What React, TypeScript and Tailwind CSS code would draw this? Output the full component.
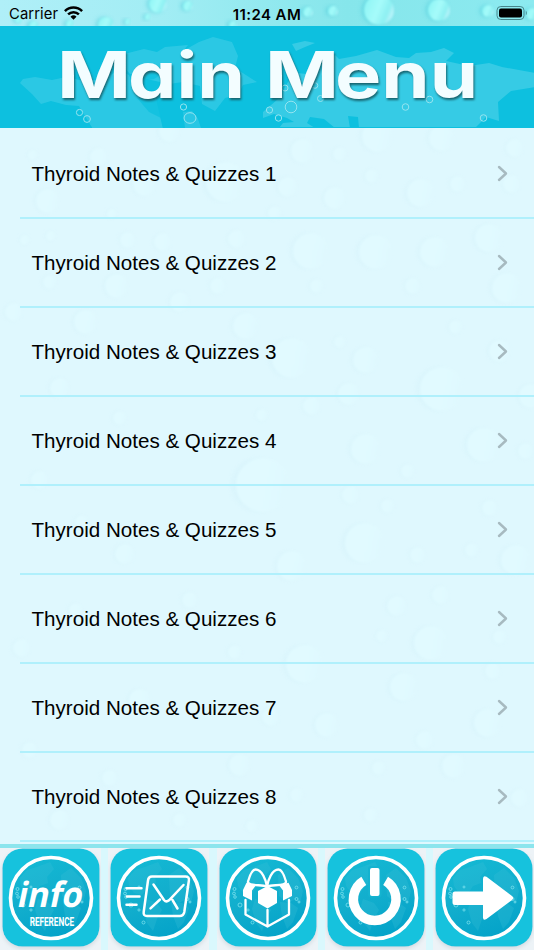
import type { ReactNode } from 'react'

const quizzes = [1, 2, 3, 4, 5, 6, 7, 8].map((n) => `Thyroid Notes & Quizzes ${n}`)

// x, y, radius
const drops: [number, number, number][] = [
  [170, 131, 11], [99, 157, 9], [33, 155, 5], [48, 201, 12], [145, 184, 12], [226, 182, 20],
  [303, 151, 12], [340, 154, 7], [378, 136, 16], [442, 138, 13], [515, 148, 9], [372, 176, 7],
  [421, 193, 14], [335, 198, 11], [458, 184, 8], [512, 184, 9], [288, 187, 10], [275, 213, 7],
  [112, 214, 5], [25, 240, 5], [51, 236, 5], [128, 240, 8], [163, 242, 9], [237, 239, 9],
  [50, 282, 7], [117, 286, 12], [218, 286, 8], [311, 251, 18], [376, 252, 17], [435, 252, 15],
  [489, 238, 14], [507, 288, 15], [413, 286, 8], [317, 286, 7], [14, 312, 9], [86, 322, 12],
  [180, 302, 10], [246, 326, 13], [292, 358, 20], [366, 360, 13], [442, 389, 22], [500, 351, 11],
  [349, 394, 11], [312, 406, 9], [456, 327, 7], [340, 342, 6], [60, 388, 10], [120, 418, 7],
  [531, 396, 12], [262, 415, 6], [263, 485, 27], [366, 449, 15], [484, 445, 17], [408, 471, 7],
  [526, 451, 8], [351, 495, 9], [388, 506, 7], [490, 508, 8], [365, 543, 20], [292, 566, 15],
  [418, 555, 8], [472, 550, 7], [516, 560, 15], [40, 480, 9], [82, 522, 7], [125, 554, 10],
  [397, 606, 10], [441, 595, 9], [305, 664, 19], [431, 643, 17], [500, 637, 7], [382, 636, 6],
  [235, 652, 7], [404, 687, 14], [493, 671, 8], [488, 723, 14], [327, 725, 12], [425, 740, 9],
  [271, 717, 9], [240, 765, 11], [454, 766, 12], [379, 768, 7], [297, 795, 7], [371, 815, 7],
  [252, 826, 6], [520, 798, 9], [22, 648, 9], [76, 610, 7], [140, 700, 11], [30, 750, 8],
  [110, 778, 8], [60, 820, 10], [180, 820, 7], [190, 600, 8],
]

const topDrops: [number, number, number][] = [
  [106, 25, 8], [158, 4, 9], [188, 6, 5], [148, 17, 3], [128, 22, 3], [19, 19, 4],
  [308, 12, 5], [333, 11, 5], [379, 10, 15], [439, 10, 11], [488, 11, 6], [532, 14, 6],
  [70, 24, 4], [34, 26, 5], [233, 25, 4],
]

function Background() {
  return (
    <svg className="absolute inset-0 h-full w-full" viewBox="0 0 534 950" aria-hidden="true">
      <defs>
        <linearGradient id="drop" x1="0" x2="1" y1="0.3" y2="0.5">
          <stop offset="0" stopColor="#e1faff" />
          <stop offset="0.55" stopColor="#e1faff" />
          <stop offset="1" stopColor="#dff8fe" />
        </linearGradient>
        <linearGradient id="topDrop" x1="0" x2="1" y1="0.2" y2="0.6">
          <stop offset="0" stopColor="#8df5f5" />
          <stop offset="0.5" stopColor="#a6fbfa" />
          <stop offset="0.8" stopColor="#8df0f2" />
          <stop offset="1" stopColor="#c1f5fc" />
        </linearGradient>
        <linearGradient id="topBar">
          <stop offset="0" stopColor="#b0eff8" />
          <stop offset="0.3" stopColor="#a2edf4" />
          <stop offset="0.65" stopColor="#86e6eb" />
          <stop offset="1" stopColor="#8ceaf0" />
        </linearGradient>
        <filter id="soft" x="-30%" y="-30%" width="160%" height="160%"><feGaussianBlur stdDeviation="2" /></filter>
        <filter id="edge"><feGaussianBlur stdDeviation="0.9" /></filter>
      </defs>
      <rect width="534" height="950" fill="#dff8fe" />
      {drops.map(([x, y, r]) => (
        <g key={`${x}-${y}`}>
          <circle cx={x - r / 5} cy={y} r={r} fill="#d3f1f9" opacity="0.4" filter="url(#soft)" />
          <circle cx={x} cy={y} r={r} fill="url(#drop)" filter="url(#edge)" />
        </g>
      ))}
      <rect width="534" height="27" fill="url(#topBar)" />
      {topDrops.map(([x, y, r]) => (
        <g key={`${x}-${y}`}>
          <circle cx={x - 2.5} cy={y} r={r} fill="#4ccad9" opacity="0.5" filter="url(#soft)" />
          <circle cx={x} cy={y} r={r} fill="url(#topDrop)" filter="url(#edge)" />
        </g>
      ))}
    </svg>
  )
}

function StatusBar() {
  return (
    <div className="relative grid h-[26px] shrink-0 grid-cols-3 items-center px-[9px] font-['Inter',sans-serif] text-[14.8px] leading-none text-black">
      <div className="flex items-center gap-1.5 pt-0.5">
        <span className="tracking-[0.1px]">Carrier</span>
        <svg width="19" height="14" viewBox="0 0 19 14" className="-mt-0.5" aria-label="Wi-Fi">
          <g fill="none" stroke="#000" strokeWidth="2.5">
            <path d="M.9 5.1a12.2 12.2 0 0 1 17.2 0" />
            <path d="M4.1 8.4a7.6 7.6 0 0 1 10.8 0" />
          </g>
          <path d="M6.5 10.8a4.3 4.3 0 0 1 6 0l-3 3z" />
        </svg>
      </div>
      <span className="pt-0.5 text-center text-[15px] font-semibold tracking-[0.4px] whitespace-nowrap">11:24 AM</span>
      <svg width="32" height="16" viewBox="0 0 32 16" className="-mr-[3px] justify-self-end" aria-label="Battery">
        <rect x="1" y="1.5" width="27" height="13" rx="3.8" fill="none" stroke="#46868c" />
        <rect x="3" y="3.5" width="23" height="9" rx="2" />
        <path d="M29.8 5.5q2 2.5 0 5z" fill="#46868c" />
      </svg>
    </div>
  )
}

function Header() {
  return (
    <header className="relative h-[102px] shrink-0 bg-[#0dc0df]">
      <svg className="block h-full w-full" viewBox="0 26 534 102" role="img" aria-label="Main Menu">
        <g fill="#36cbe5">
          <path d="m20 83 3-4 12-2 17 3 14-3 18 4 20-2 15-9 10 5 6 14 20 6 8 34h-70l-8-13-6-10-13-1-15-4-10 3-9-10z" opacity=".75" />
          <path d="m120 62 4-8 20-5 13 3 8-5 23-2-5 6 16-9 14-5 19 5 6 14-3 12 14 9 8 5-14 3-5 10-13 3-10 13-13-7-2-18-17-4-14 2-18-4-21-6z" opacity=".75" />
          <path d="m183 112 9-1 6 8 3 9h-16z" opacity=".7" />
          <path d="m292 44 13-3 10 2-10 4-9 4z" />
          <path d="m263 112 15-13 10-17 9-9 10 1 9-12 6 3 13-10 4 4 17-3 21-6 19 7 13 1 7-5 15-1 13-4 10 5-8 8 23 5 20-3 13 4 33 6v14l-24 4-13 11 1 19-13-4-10 10H263z" />
          <path d="m345 64 14-7 23-4-22 8-11 9z" />
        </g>
        <g fill="#0dc0df">
          <path d="m137 98 14-2 12 9-2 13-12-6zM150 71l12 3-8 5-13 2z" opacity=".75" />
          <path d="m263 118 11-4 13 4 7 4-11 1-4 5h-16zM310 117l14 2 11 9h-20l-8-5zM348 116l10 1 1 11h-9z" />
        </g>
        <g fill="none" stroke="#95e4f0" strokeWidth="1">
          <circle cx="79.5" cy="112.5" r="3.1" /><circle cx="87" cy="119" r="3.4" />
          <circle cx="183.5" cy="107" r="3.1" /><ellipse cx="190" cy="118" rx="6" ry="5.3" />
          <circle cx="285" cy="88" r="3" /><circle cx="315" cy="85.5" r="2.8" />
          <circle cx="320.5" cy="98.5" r="3" /><circle cx="291" cy="107" r="5.8" />
          <circle cx="269.5" cy="110" r="3.1" /><circle cx="278.5" cy="118" r="3.2" />
          <circle cx="405.5" cy="107" r="3.3" /><circle cx="429.5" cy="99.5" r="3.3" />
          <circle cx="483.5" cy="118" r="3.3" />
        </g>
        <g
          className="font-['Inter',sans-serif] text-[64px] font-bold [font-feature-settings:'cv11'] [filter:drop-shadow(1.5px_2px_1px_#17636e)]"
          fill="#f3fdff"
        >
          <text y="97.7">
            <tspan x="57" textLength="74" lengthAdjust="spacingAndGlyphs">M</tspan>
            <tspan x="128" textLength="117" lengthAdjust="spacingAndGlyphs">ain</tspan>
          </text>
          <text y="97.7">
            <tspan x="265" textLength="74" lengthAdjust="spacingAndGlyphs">M</tspan>
            <tspan x="335" textLength="143" lengthAdjust="spacingAndGlyphs">enu</tspan>
          </text>
        </g>
      </svg>
    </header>
  )
}

function QuizRow({ title }: { title: string }) {
  return (
    <li className="ml-5 flex h-[89px] shrink-0 items-center justify-between border-b-2 border-[#b0f0fc] pr-[26px] pl-[11.5px]">
      <span className="pt-px text-[20.6px] leading-none text-black">{title}</span>
      <svg width="11" height="17" viewBox="0 0 11 17" fill="none" aria-hidden="true">
        <path d="m2 2 7 6.5L2 15" stroke="#a7bac0" strokeWidth="2.4" strokeLinecap="round" strokeLinejoin="round" />
      </svg>
    </li>
  )
}

function Tile({ label, children }: { label: string; children: ReactNode }) {
  return (
    <button type="button" aria-label={label} className="h-[102px] w-[101px] shrink-0 bg-[#edf3f7]">
      <svg className="block" width="101" height="102" viewBox="0 0 101 102">
        <defs>
          <linearGradient id="disc" x1="0.2" y1="0" x2="0.6" y2="1">
            <stop offset="0" stopColor="#13b9d4" />
            <stop offset="0.5" stopColor="#12aecd" />
            <stop offset="1" stopColor="#04a3c9" />
          </linearGradient>
          <filter id="tileShadow" x="-10%" y="-10%" width="120%" height="125%">
            <feDropShadow dx="0" dy="2" stdDeviation="2" floodColor="#a7b7bf" floodOpacity=".4" />
          </filter>
        </defs>
        <rect x="2.5" y=".5" width="97" height="98" rx="20" fill="#14c2dd" filter="url(#tileShadow)" />
        <circle cx="51" cy="50" r="40.5" fill="url(#disc)" stroke="#fff" strokeWidth="3.6" />
        <g fill="#3bc0d9" opacity=".28">
          <path d="m20 30 7-8 10-3 13-5 4 7-7 8 1 6-8 3-6 9-8-2-5-7z" />
          <path d="m38 51 11 4 5 7-5 9-4 12-6-8-4-14z" />
          <path d="m61 27 10-7 10 10 5 13-3 12-5-4-7 4-9-7z" />
          <path d="m63 54 11 1 7 5-5 14-6 7-5-13z" />
        </g>
        <g fill="none" stroke="#7ce1ed" strokeWidth=".8">
          <circle cx="17.5" cy="41" r="1.5" /><circle cx="17" cy="45.5" r="1.4" /><circle cx="18" cy="49" r="1.3" />
          <circle cx="31" cy="39" r="1" /><circle cx="79.5" cy="39.5" r="1.4" />
          <circle cx="79.5" cy="51" r="1.5" /><circle cx="82" cy="54" r="1" />
          <circle cx="23" cy="57" r="2" /><circle cx="31" cy="62" r="1.1" /><circle cx="35.5" cy="74.5" r="1.5" />
        </g>
        {children}
      </svg>
    </button>
  )
}

function Toolbar() {
  return (
    <nav className="relative flex h-[106px] shrink-0 justify-between border-t-4 border-[#8ce5ed] bg-[#d9f8fd]">
      <Tile label="Info reference">
        <g fill="#fff">
          <text transform="translate(16 59) skewX(-12)" textLength="65" lengthAdjust="spacingAndGlyphs" className="font-['Open_Sans',sans-serif] text-[35px] font-bold">info</text>
          <text transform="translate(29.7 78.3) scale(.605 1)" className="font-['Roboto',sans-serif] text-[13.5px] font-bold">REFERENCE</text>
        </g>
      </Tile>
      <Tile label="Contact">
        <g fill="none" stroke="#fff" strokeWidth="2.5" strokeLinecap="round" strokeLinejoin="round">
          <path d="M44 28.5h33.5q4 0 3.4 4l-4.6 31.5q-.7 4-4.7 4h-32.5q-4 0-3.4-4l4.3-31.5q.5-4 4-4z" />
          <path d="m45.5 36.5 10.5 15.5q2.2 2.6 5 .3L75.5 37M42.5 60.3l9.5-8.8M64.5 52l5 8.5" />
          <path d="M18.5 40.2h15M19 48.5h12.5M18.5 56.8h10" />
        </g>
      </Tile>
      <Tile label="Gifts">
        <g fill="none" stroke="#fff" strokeWidth="2.3" strokeLinejoin="round" strokeLinecap="round">
          <path d="M50 38.5C49 32 45 21.500 38.500 21.500 35 21.500 32 30 31 33.500 30.200 38 44 36.500 50 38.500Z" />
          <path d="M50 38.500C51 32 55 21.500 61.500 21.500 65 21.500 68 30 69 33.500 69.800 38 56 36.500 50 38.500Z" />
          <path d="M28.500 52v14.500L50.500 78.500 72 66.500V52M50.500 62v15" />
        </g>
        <g fill="#fff">
          <path d="m29.500 34.800 9.500 2.400-4 5.300v10l-9-4.500V42z" />
          <path d="m71.500 34.800-9.500 2.400 4 5.300v10l9-4.500V42z" />
          <path d="m50.500 38 9.500 5v12l-9.500 5.500L41 55V43z" />
        </g>
      </Tile>
      <Tile label="Quit">
        <path d="M38.800 32.800a21.300 21.300 0 1 0 21.800 0" fill="none" stroke="#fff" strokeWidth="9.5" />
        <rect x="43" y="18" width="13.5" height="31.5" rx="3" fill="#14b3d0" />
        <rect x="45" y="20" width="9.5" height="28" rx="2" fill="#fff" />
      </Tile>
      <Tile label="Next">
        <path d="M22 43.5h28V31q0-4 3.5-2.2L79 48q2.5 2 0 4L53.5 71Q50 73 50 69.5V57H22q-2.5 0-2.5-2.5V46q0-2.5 2.5-2.5z" fill="#fff" />
      </Tile>
    </nav>
  )
}

function App() {
  return (
    <div className="relative flex h-[950px] w-[534px] flex-col overflow-hidden font-['Liberation_Sans',Arial,sans-serif]">
      <Background />
      <StatusBar />
      <Header />
      <main className="relative min-h-0 flex-1 overflow-hidden pt-0.5">
        <ul className="flex flex-col">
          {quizzes.map((title) => (
            <QuizRow key={title} title={title} />
          ))}
        </ul>
      </main>
      <Toolbar />
    </div>
  )
}

export default App
